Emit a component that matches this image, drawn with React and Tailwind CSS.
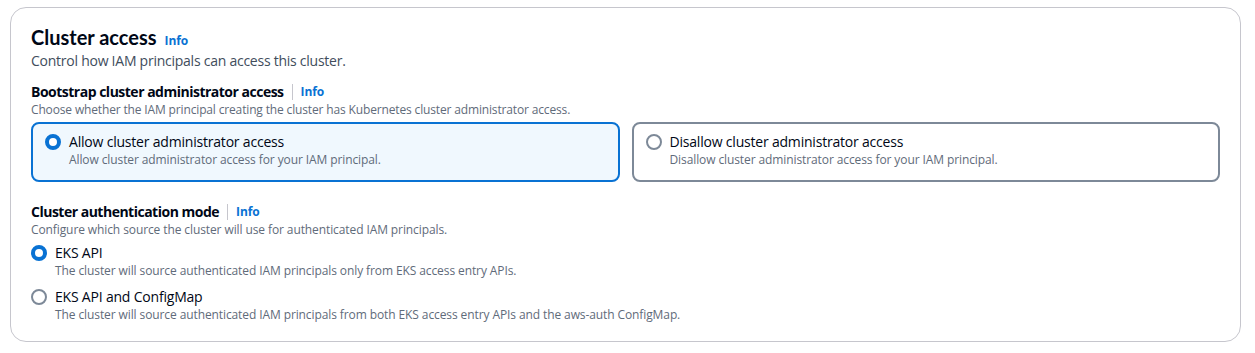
const font = { fontFamily: '"Open Sans", "Noto Sans", sans-serif' };

function InfoLink() {
  return (
    <a className="text-[12px] font-bold leading-4 tracking-[-0.1px] text-[#0972d3] cursor-pointer">Info</a>
  );
}

function Radio({ checked }) {
  return checked ? (
    <span className="shrink-0 w-4 h-4 rounded-full border-[4px] border-[#0972d3] bg-white" />
  ) : (
    <span className="shrink-0 w-4 h-4 rounded-full border-2 border-[#7d8998] bg-white" />
  );
}

function FieldLabel({ children, className = "" }) {
  return (
    <div className={`flex items-center h-5 ${className}`}>
      <span className="text-[14px] font-bold leading-5 tracking-[-0.5px] text-[#000716]">{children}</span>
      <span className="mx-2 w-px h-4 bg-[#c6c6cd]" />
      <InfoLink />
    </div>
  );
}

function Tile({ checked, title, desc }) {
  return (
    <div
      className={
        checked
          ? "h-[60px] rounded-lg border-2 border-[#0972d3] bg-[#f0f8fe] pl-3 pr-4 pt-2"
          : "h-[60px] rounded-lg border-2 border-[#7d8998] bg-white pl-3 pr-4 pt-2"
      }
    >
      <div className="flex items-center gap-2">
        <Radio checked={checked} />
        <span className="text-[14px] leading-5 tracking-[-0.2px] text-[#000716]">{title}</span>
      </div>
      <p className="pl-6 text-[12px] leading-4 tracking-[-0.1px] text-[#5f6b7a]">{desc}</p>
    </div>
  );
}

function ListOption({ checked, title, desc, className = "" }) {
  return (
    <div className={className}>
      <div className="flex items-center gap-2">
        <Radio checked={checked} />
        <span className="text-[14px] leading-5 tracking-[-0.2px] text-[#000716]">{title}</span>
      </div>
      <p className="pl-6 text-[12px] leading-4 tracking-[-0.1px] text-[#5f6b7a]">{desc}</p>
    </div>
  );
}

export default function App() {
  return (
    <div className="w-[1255px] h-[353px] bg-white pt-[7px] pl-[10px]" style={font}>
      <section className="w-[1231px] h-[335px] rounded-2xl border border-[#c6c6cd] px-5 pt-[17px]">
        <div className="flex items-baseline gap-2 h-6">
          <h2
            className="text-[20px] font-bold leading-6 text-[#000716]"
            style={{ fontFamily: 'Lato, "Open Sans", sans-serif' }}
          >
            Cluster access
          </h2>
          <InfoLink />
        </div>
        <p className="mt-[2px] text-[14px] leading-5 tracking-[-0.25px] text-[#414d5c]">
          Control how IAM principals can access this cluster.
        </p>

        <FieldLabel className="mt-[11px]">Bootstrap cluster administrator access</FieldLabel>
        <p className="text-[12px] leading-4 tracking-[-0.15px] text-[#5f6b7a]">
          Choose whether the IAM principal creating the cluster has Kubernetes cluster administrator access.
        </p>
        <div className="mt-1 grid grid-cols-2 gap-3">
          <Tile
            checked
            title="Allow cluster administrator access"
            desc="Allow cluster administrator access for your IAM principal."
          />
          <Tile
            title="Disallow cluster administrator access"
            desc="Disallow cluster administrator access for your IAM principal."
          />
        </div>

        <FieldLabel className="mt-5">Cluster authentication mode</FieldLabel>
        <p className="text-[12px] leading-4 tracking-[-0.1px] text-[#5f6b7a]">
          Configure which source the cluster will use for authenticated IAM principals.
        </p>
        <ListOption
          className="mt-[5px]"
          checked
          title="EKS API"
          desc="The cluster will source authenticated IAM principals only from EKS access entry APIs."
        />
        <ListOption
          className="mt-2"
          title="EKS API and ConfigMap"
          desc="The cluster will source authenticated IAM principals from both EKS access entry APIs and the aws-auth ConfigMap."
        />
      </section>
    </div>
  );
}
